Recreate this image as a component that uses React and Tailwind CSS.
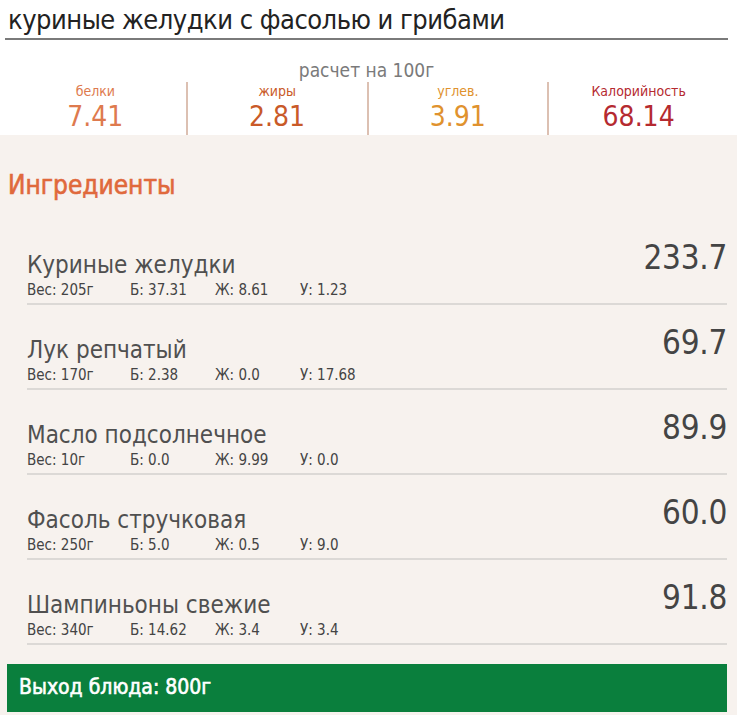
const ingredients = [
  { name: 'Куриные желудки', weight: '205г', b: '37.31', f: '8.61', c: '1.23', kcal: '233.7' },
  { name: 'Лук репчатый', weight: '170г', b: '2.38', f: '0.0', c: '17.68', kcal: '69.7' },
  { name: 'Масло подсолнечное', weight: '10г', b: '0.0', f: '9.99', c: '0.0', kcal: '89.9' },
  { name: 'Фасоль стручковая', weight: '250г', b: '5.0', f: '0.5', c: '9.0', kcal: '60.0' },
  { name: 'Шампиньоны свежие', weight: '340г', b: '14.62', f: '3.4', c: '3.4', kcal: '91.8' },
];

const stats = [
  { label: 'белки', value: '7.41', color: 'text-[#de7a4e]' },
  { label: 'жиры', value: '2.81', color: 'text-[#c95a28]' },
  { label: 'углев.', value: '3.91', color: 'text-[#e0922e]' },
  { label: 'Калорийность', value: '68.14', color: 'text-[#b52a30]' },
];

export default function App() {
  return (
    <div className="w-[737px] h-[715px] bg-white overflow-hidden font-['DejaVu_Sans_Condensed','Liberation_Sans',sans-serif]">
      <div className="px-[5px] pt-[3px]">
        <h1 className="pl-[3px] text-[27px] leading-[34px] text-[#222] tracking-[-0.5px]">куриные желудки с фасолью и грибами</h1>
        <div className="w-[723px] h-[2px] bg-[#7a7a7a] mt-[1px]"></div>
      </div>

      <div className="w-[723px] ml-[5px] pt-[19px]">
        <div className="text-center text-[19px] leading-[22px] text-[#7a7a7a]">расчет на 100г</div>
        <div className="grid grid-cols-4 mt-[1px]">
          {stats.map((s, i) => (
            <div key={s.label} className={`flex flex-col items-center h-[53px] ${i > 0 ? 'border-l-2 border-[#dcc0b2]' : ''}`}>
              <div className={`text-[14px] leading-[18px] ${s.color}`}>{s.label}</div>
              <div className={`text-[28px] leading-[34px] ${s.color}`}>{s.value}</div>
            </div>
          ))}
        </div>
      </div>

      <div className="bg-[#f7f2ee] h-full">
        <h2 className="pl-[8px] pt-[34px] text-[26px] leading-[32px] text-[#e0693c] [-webkit-text-stroke:0.6px_#e0693c]">Ингредиенты</h2>
        <div className="pl-[27px] pr-[10px] pt-[19px]">
          {ingredients.map((it) => (
            <div key={it.name} className="flex items-end justify-between border-b-2 border-[#dcd9d6] h-[85px] pb-[4px]">
              <div>
                <div className="text-[24px] leading-[28px] text-[#505050] mb-[2px]">{it.name}</div>
                <div className="flex text-[15px] leading-[18px] text-[#444]">
                  <span className="w-[103px]">Вес: {it.weight}</span>
                  <span className="w-[85px]">Б: {it.b}</span>
                  <span className="w-[85px]">Ж: {it.f}</span>
                  <span>У: {it.c}</span>
                </div>
              </div>
              <div className="text-[33px] leading-[36px] text-[#444] mb-[23px] tracking-[-0.3px]">{it.kcal}</div>
            </div>
          ))}
        </div>
        <div className="mx-[7px] mt-[19px] w-[720px] h-[48px] bg-[#0a7f3d] flex items-center pl-[12px]">
          <span className="text-[21px] text-white [-webkit-text-stroke:0.6px_white]">Выход блюда: 800г</span>
        </div>
      </div>
    </div>
  );
}
